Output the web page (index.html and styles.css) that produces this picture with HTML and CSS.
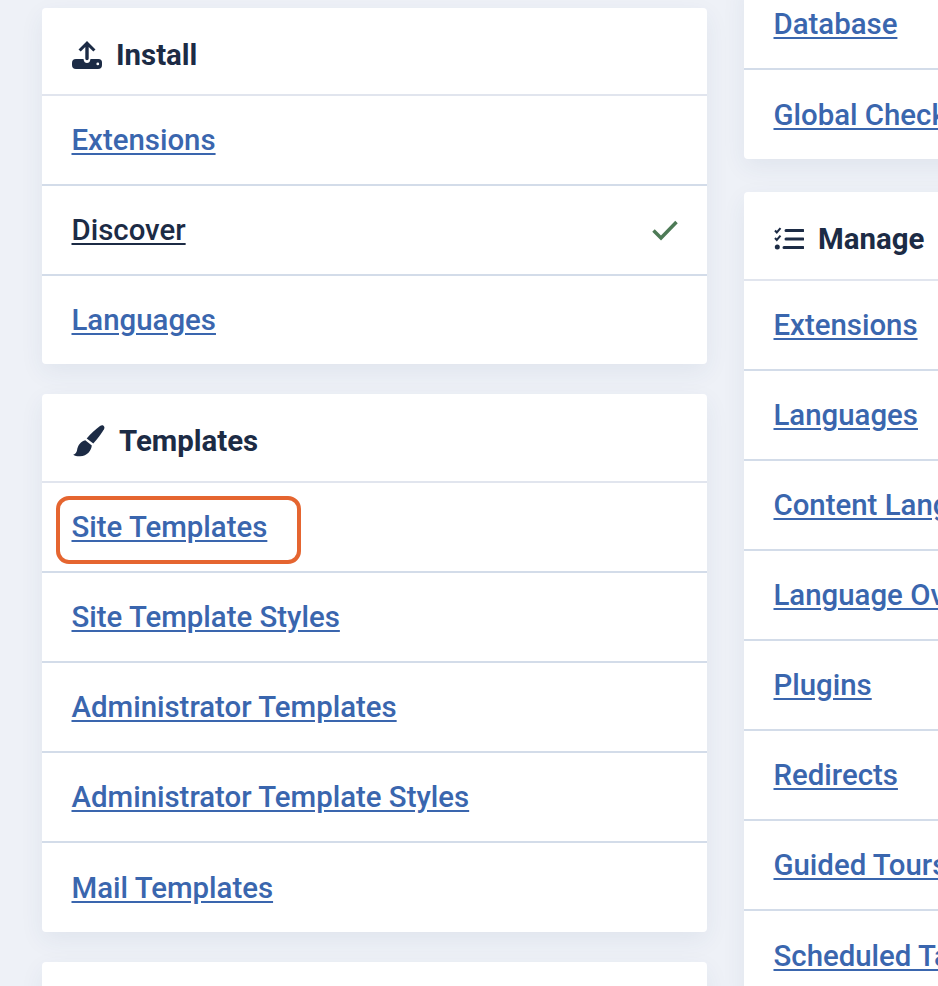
FILE: index.html
```html
<!DOCTYPE html>
<html lang="en">
<head>
<meta charset="utf-8">
<title>System</title>
<link rel="stylesheet" href="styles.css">
</head>
<body>
<main class="columns">
  <div class="column">
    <section class="card">
      <h2 class="card-head">
        <svg class="icon icon-install" viewBox="0 0 30 30"><path class="solid" d="M15 1 23.500 9.400 21.300 11.500 16.700 7V18.500A1.700 1.700 0 0 1 13.300 18.500V7L8.700 11.500 6.500 9.400Z"/><path class="solid" fill-rule="evenodd" d="M4 19H11.500C12 22 13.200 23 15 23S18 22 18.500 19H26.500A3.500 3.500 0 0 1 30 22.500V25A4 4 0 0 1 26 29H4A4 4 0 0 1 0 25V23A4 4 0 0 1 4 19ZM25.800 22.500A1.400 1.400 0 1 0 25.800 25.300A1.400 1.400 0 0 0 25.800 22.500Z"/></svg>
        <span>Install</span>
      </h2>
      <ul class="rows rows-short">
        <li class="row"><a class="link" href="#">Extensions</a></li>
        <li class="row row-active"><a class="link link-active" href="#">Discover</a>
          <svg class="check" viewBox="0 0 28 22"><path d="M2.500 11.500 10 19 25.500 3"/></svg>
        </li>
        <li class="row"><a class="link" href="#">Languages</a></li>
      </ul>
    </section>
    <section class="card">
      <h2 class="card-head head-tall">
        <svg class="icon icon-brush" viewBox="0 0 32 32"><path class="solid" d="M30.200.500C31.400 1.300 31.800 2.800 31 4.200 28 9 24 14.500 20.300 18.600L13.700 13.400C17.500 8.800 22.500 4.200 27 1 28 .3 29.300 0 30.200.500Z"/><path class="solid" d="M12.300 15.200 18.800 20.500C18.200 25.500 14.500 31 7 31.300 4.500 31.400 2 31 .2 29.800 2.800 28.800 3.500 27.500 4 25.500 4.800 20 8 16 12.300 15.200Z"/></svg>
        <span>Templates</span>
      </h2>
      <ul class="rows">
        <li class="row"><a class="link link-marked" href="#">Site Templates</a></li>
        <li class="row"><a class="link" href="#">Site Template Styles</a></li>
        <li class="row"><a class="link" href="#">Administrator Templates</a></li>
        <li class="row"><a class="link" href="#">Administrator Template Styles</a></li>
        <li class="row"><a class="link" href="#">Mail Templates</a></li>
      </ul>
    </section>
    <section class="card card-next"></section>
  </div>
  <div class="column column-right">
    <section class="card">
      <ul class="rows">
        <li class="row"><a class="link" href="#">Database</a></li>
        <li class="row"><a class="link" href="#">Global Check-in</a></li>
      </ul>
    </section>
    <section class="card">
      <h2 class="card-head head-tall">
        <svg class="icon icon-manage" viewBox="0 0 30 24"><path class="line" d="M1 3.500 2.800 5.500 6.500 1.200M1 11 2.800 13 6.500 8.700"/><circle class="solid" cx="3.300" cy="20" r="2.500"/><path class="bar" d="M12 3.500H29M12 12H29M10 20.500H29"/></svg>
        <span>Manage</span>
      </h2>
      <ul class="rows">
        <li class="row"><a class="link" href="#">Extensions</a></li>
        <li class="row"><a class="link" href="#">Languages</a></li>
        <li class="row"><a class="link" href="#">Content Languages</a></li>
        <li class="row"><a class="link" href="#">Language Overrides</a></li>
        <li class="row"><a class="link" href="#">Plugins</a></li>
        <li class="row"><a class="link" href="#">Redirects</a></li>
        <li class="row"><a class="link" href="#">Guided Tours</a></li>
        <li class="row"><a class="link" href="#">Scheduled Tasks</a></li>
      </ul>
    </section>
  </div>
</main>
</body>
</html>
```

FILE: styles.css
```css
* { box-sizing: border-box; }
html, body { margin: 0; height: 986px; overflow: hidden; }
body {
  background: #eef1f7;
  font-family: Roboto, "Liberation Sans", sans-serif;
  color: #1c2b45;
}
.columns {
  display: grid;
  grid-template-columns: 665px 665px;
  column-gap: 37px;
  padding: 8px 0 0 42px;
}
.column { display: flex; flex-direction: column; gap: 30px; }
.column-right { margin-top: -28px; gap: 33px; }
.card {
  background: #fff;
  border-radius: 4px;
  box-shadow: 0 8px 24px rgba(40, 70, 120, .07);
}
.card-next { height: 60px; }
.card-head {
  display: flex;
  align-items: center;
  gap: 14px;
  height: 88px;
  margin: 0;
  padding: 7px 0 0 30px;
  font-size: 29.400px;
  font-weight: 700;
  color: #1c2b45;
  border-bottom: 2px solid #e1e5ee;
}
.head-tall { height: 89px; }
.icon { flex: none; display: block; }
.icon-install { width: 30px; height: 30px; }
.icon-brush { width: 32px; height: 32px; margin-left: 1px; }
.icon-manage { width: 30px; height: 24px; }
.solid { fill: #1c2b45; }
.line { fill: none; stroke: #1c2b45; stroke-width: 2; }
.bar { fill: none; stroke: #1c2b45; stroke-width: 3; stroke-linecap: round; }
.rows { list-style: none; margin: 0; padding: 0; }
.row {
  display: flex;
  align-items: center;
  justify-content: space-between;
  height: 90px;
  padding: 0 28px 0 29.500px;
  border-bottom: 2px solid #d3dce9;
}
.row:last-child { border-bottom: 0; height: 89px; }
.rows-short .row:last-child { height: 88px; }
.link {
  position: relative;
  font-size: 29.400px;
  font-weight: 500;
  color: #3a66ae;
  text-decoration: underline;
  text-underline-offset: 3px;
  white-space: nowrap;
}
.link-active { color: #1c2b45; }
.link-marked::after {
  content: "";
  position: absolute;
  left: -15.500px;
  right: -34px;
  top: -14px;
  bottom: -20px;
  border: 4px solid #e56530;
  border-radius: 13px;
}
.check { width: 28px; height: 22px; }
.check path { fill: none; stroke: #4d7a56; stroke-width: 3.500; }
```
